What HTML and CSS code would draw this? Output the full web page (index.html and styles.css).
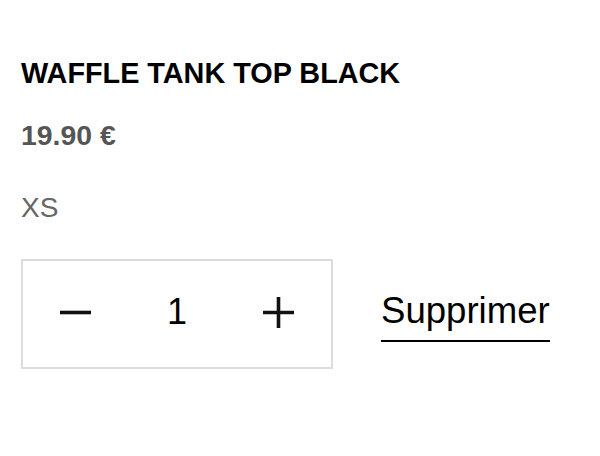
FILE: index.html
```html
<!DOCTYPE html>
<html lang="fr">
<head>
<meta charset="utf-8">
<link rel="stylesheet" href="styles.css">
</head>
<body>
<div class="item">
  <h1 class="title">WAFFLE TANK TOP BLACK</h1>
  <div class="price">19.90 €</div>
  <div class="size">XS</div>
  <div class="actions">
    <div class="qty">
      <button class="qbtn" aria-label="moins">
        <svg width="31" height="31" viewBox="0 0 31 31"><path d="M0 15.5H31" stroke="#111" stroke-width="3.6" fill="none"/></svg>
      </button>
      <span class="qnum">1</span>
      <button class="qbtn" aria-label="plus">
        <svg width="31" height="31" viewBox="0 0 31 31"><path d="M0 15.5H31M15.5 0V31" stroke="#111" stroke-width="3.6" fill="none"/></svg>
      </button>
    </div>
    <a class="remove" href="#">Supprimer</a>
  </div>
</div>
</body>
</html>
```
FILE: styles.css
```css
html, body {
  margin: 0;
  padding: 0;
  background: #fff;
}
body {
  font-family: "Liberation Sans", Arial, sans-serif;
  color: #000;
}
.item {
  display: flex;
  flex-direction: column;
  align-items: flex-start;
  padding: 57px 21px 0;
}
.title {
  margin: 0;
  font-size: 28.8px;
  font-weight: 700;
  line-height: 32px;
  color: #000;
}
.price {
  margin-top: 30px;
  font-size: 28.4px;
  font-weight: 700;
  line-height: 32px;
  color: #555;
}
.size {
  margin-top: 41px;
  font-size: 28px;
  line-height: 32px;
  color: #666;
}
.actions {
  margin-top: 35px;
  display: flex;
  align-items: center;
  gap: 48px;
}
.qty {
  box-sizing: border-box;
  width: 312px;
  height: 110px;
  border: 2px solid #dcdcdc;
  padding: 0 37px 4px;
  display: flex;
  align-items: center;
  justify-content: space-between;
}
.qbtn {
  border: 0;
  background: none;
  padding: 0;
  margin: 0;
  display: flex;
  width: 31px;
  height: 31px;
}
.qnum {
  font-size: 36px;
  line-height: 36px;
  color: #000;
}
.remove {
  margin-top: 7px;
  font-size: 36.6px;
  line-height: 36px;
  color: #000;
  text-decoration: none;
  padding-bottom: 11px;
  border-bottom: 2px solid #000;
}
```
